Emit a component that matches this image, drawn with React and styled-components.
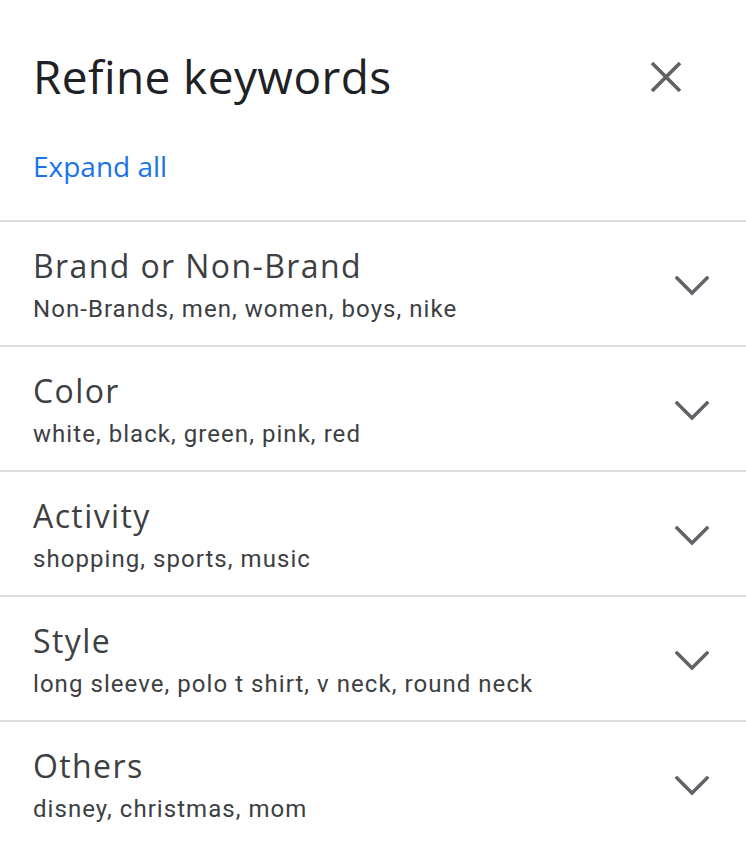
import React from "react";
import styled, { createGlobalStyle } from "styled-components";

const Global = createGlobalStyle`
  html, body { margin: 0; padding: 0; background: #ffffff; }
  body { font-family: Roboto, "Noto Sans", Arial, sans-serif; }
  * { box-sizing: border-box; }
`;

const Panel = styled.div`
  width: 746px;
  background: #ffffff;
`;

const Header = styled.header`
  padding: 48px 64px 38px 33px;
  border-bottom: 2px solid #dadce0;
`;

const TitleRow = styled.div`
  display: flex;
  align-items: flex-start;
  justify-content: space-between;
`;

const Title = styled.h1`
  margin: 0;
  font-family: "Open Sans", Roboto, sans-serif;
  font-weight: 400;
  font-size: 46px;
  line-height: 56px;
  color: #202124;
  letter-spacing: 0.4px;
`;

const CloseButton = styled.button`
  border: 0;
  background: none;
  padding: 0;
  margin-top: 13px;
  display: flex;
  cursor: pointer;
`;

const ExpandLink = styled.a`
  display: inline-block;
  margin-top: 46px;
  font-family: "Open Sans", Roboto, sans-serif;
  font-size: 28px;
  line-height: 32px;
  color: #1a73e8;
  text-decoration: none;
`;

const Row = styled.div`
  display: flex;
  align-items: center;
  justify-content: space-between;
  padding: 25px 37px 20px 33px;
  border-bottom: ${(p) => (p.$last ? "0" : "2px solid #dadce0")};
`;

const RowText = styled.div`
  display: flex;
  flex-direction: column;
  gap: 8px;
`;

const RowTitle = styled.div`
  font-family: "Open Sans", Roboto, sans-serif;
  font-weight: 500;
  font-size: 32px;
  line-height: 38px;
  letter-spacing: 1.4px;
  color: #3c4043;
`;

const RowSub = styled.div`
  font-size: 24px;
  line-height: 32px;
  letter-spacing: 1.05px;
  color: #3c4043;
`;

const Chevron = () => (
  <svg width="34" height="20" viewBox="0 0 34 20" fill="none">
    <polyline
      points="2,2 17,17 32,2"
      stroke="#5f6368"
      strokeWidth="3.4"
      strokeLinecap="square"
      strokeLinejoin="miter"
    />
  </svg>
);

const CloseIcon = () => (
  <svg width="32" height="32" viewBox="0 0 32 32" fill="none">
    <path d="M2 2 L30 30 M30 2 L2 30" stroke="#616161" strokeWidth="3.6" />
  </svg>
);

const groups = [
  ["Brand or Non-Brand", "Non-Brands, men, women, boys, nike"],
  ["Color", "white, black, green, pink, red"],
  ["Activity", "shopping, sports, music"],
  ["Style", "long sleeve, polo t shirt, v neck, round neck"],
  ["Others", "disney, christmas, mom"],
];

export default function App() {
  return (
    <>
      <Global />
      <Panel>
        <Header>
          <TitleRow>
            <Title>Refine keywords</Title>
            <CloseButton aria-label="Close">
              <CloseIcon />
            </CloseButton>
          </TitleRow>
          <ExpandLink href="#">Expand all</ExpandLink>
        </Header>
        {groups.map(([t, s], i) => (
          <Row key={t} $last={i === groups.length - 1}>
            <RowText>
              <RowTitle>{t}</RowTitle>
              <RowSub>{s}</RowSub>
            </RowText>
            <Chevron />
          </Row>
        ))}
      </Panel>
    </>
  );
}
